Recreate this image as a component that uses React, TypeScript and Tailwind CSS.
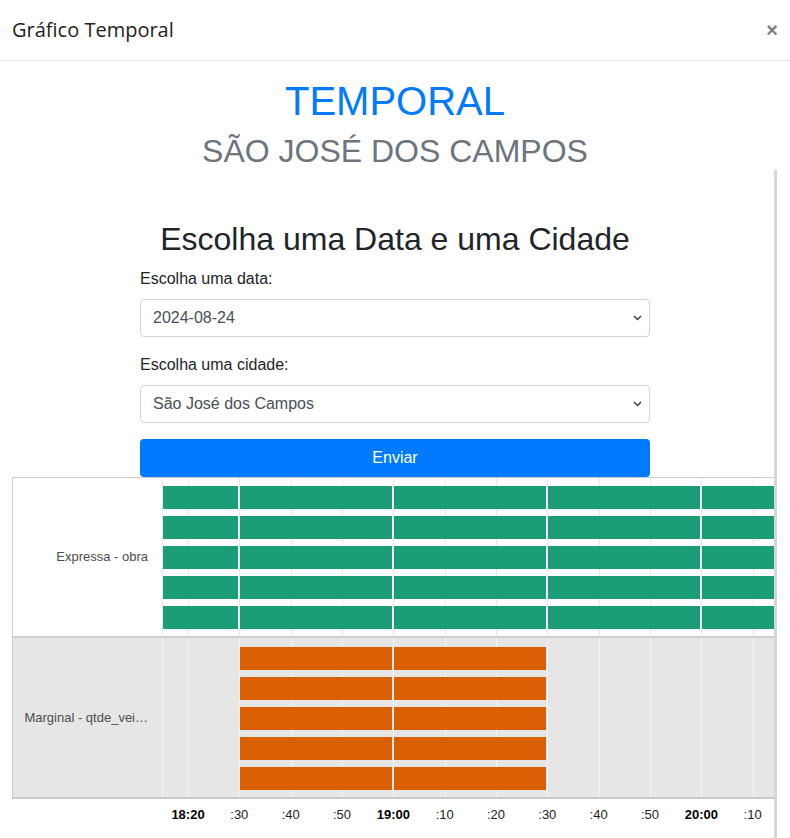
import React from "react";

const PX_PER_10MIN = 51.333;
// grid positions inside the plot area (plot starts at page x=162)
const GRID = Array.from({ length: 12 }, (_, i) => 26 + i * PX_PER_10MIN);
const TICKS = [
  { label: "18:20", bold: true },
  { label: ":30" },
  { label: ":40" },
  { label: ":50" },
  { label: "19:00", bold: true },
  { label: ":10" },
  { label: ":20" },
  { label: ":30" },
  { label: ":40" },
  { label: ":50" },
  { label: "20:00", bold: true },
  { label: ":10" },
];

const PLOT_W = 612;

type Seg = [number, number];

const b = (i: number) => 26 + i * PX_PER_10MIN; // tick i position
const GREEN: Seg[] = [
  [0, b(1)],
  [b(1), b(4)],
  [b(4), b(7)],
  [b(7), b(10)],
  [b(10), PLOT_W + 4],
];
const ORANGE: Seg[] = [
  [b(1), b(4)],
  [b(4), b(7)],
];

function ChevronDown() {
  return (
    <svg width="9" height="6" viewBox="0 0 9 6" className="shrink-0">
      <path d="M1 1l3.5 3.5L8 1" fill="none" stroke="#343a40" strokeWidth="1.4" />
    </svg>
  );
}

function SelectBox({ value }: { value: string }) {
  return (
    <div className="flex h-[38px] w-full items-center justify-between rounded border border-[#ced4da] bg-white pl-3 pr-[7px] text-base text-[#495057]">
      <span>{value}</span>
      <ChevronDown />
    </div>
  );
}

function TimelineRow({
  label,
  segs,
  color,
  top,
  height,
  shaded,
}: {
  label: string;
  segs: Seg[];
  color: string;
  top: number;
  height: number;
  shaded?: boolean;
}) {
  const grid = shaded ? "#f5f5f5" : "#e8e8e8";
  return (
    <div className={`flex ${shaded ? "bg-[#e6e6e6]" : "bg-white"}`} style={{ height }}>
      <div className="flex w-[149px] items-center justify-end pr-[14px] text-[13px] text-[#4d4d4d]">
        <span className="whitespace-nowrap">{label}</span>
      </div>
      <svg width={PLOT_W} height={height} className="block">
        <line x1={0.5} x2={0.5} y1={0} y2={height} stroke={grid} />
        {GRID.map((x) => (
          <line key={x} x1={Math.round(x) + 0.5} x2={Math.round(x) + 0.5} y1={0} y2={height} stroke={grid} />
        ))}
        {[0, 1, 2, 3, 4].map((r) =>
          segs.map(([a, e], i) => (
            <rect
              key={`${r}-${i}`}
              x={Math.round(a) + 1}
              y={top + r * 30}
              width={Math.round(e) - Math.round(a) - 2}
              height={23}
              fill={color}
            />
          ))
        )}
      </svg>
    </div>
  );
}

export default function App() {
  return (
    <div className="h-[838px] w-[790px] overflow-hidden bg-white font-['Liberation_Sans',Arial,sans-serif] text-[#212529]">
      {/* Modal header */}
      <div className="flex h-[61px] items-center justify-between border-b border-[#e5e5e5] pl-3 pr-[12px]">
        <h5 className="font-['Open_Sans',sans-serif] text-[20px] text-[#222]">Gráfico Temporal</h5>
        <span className="font-['Liberation_Sans',sans-serif] text-[20px] leading-none font-bold text-[#808080]">×</span>
      </div>

      {/* Modal body */}
      <div className="pt-4">
        <h1 className="mb-2 text-center text-[40px] leading-[48px] text-[#007bff]">TEMPORAL</h1>
        <h2 className="text-center text-[32px] leading-[37px] text-[#6c757d]">SÃO JOSÉ DOS CAMPOS</h2>

        <div className="w-[777px] border-r-[3px] border-[#d6d6d6] pt-[50px]">
          <form className="ml-[140px] w-[510px]" onSubmit={(e) => e.preventDefault()}>
            <h2 className="mb-[9px] text-center text-[32px] leading-[38px]">Escolha uma Data e uma Cidade</h2>
            <div className="mb-4">
              <label className="mb-2 block leading-6">Escolha uma data:</label>
              <SelectBox value="2024-08-24" />
            </div>
            <div className="mb-4">
              <label className="mb-2 block leading-6">Escolha uma cidade:</label>
              <SelectBox value="São José dos Campos" />
            </div>
            <button
              type="submit"
              className="h-[38px] w-full rounded bg-[#007bff] text-base text-white"
            >
              Enviar
            </button>
          </form>

          {/* Timeline chart */}
          <div className="ml-3 w-[762px]">
            <div className="border-t border-l border-[#cccccc]">
              <TimelineRow label="Expressa - obra" segs={GREEN} color="#1b9e77" top={8} height={158} />
              <div className="border-t-2 border-[#cfcfcf]">
                <TimelineRow label="Marginal - qtde_vei…" segs={ORANGE} color="#d95f02" top={9} height={159} shaded />
              </div>
            </div>
            <div className="border-t-2 border-[#c8c8c8]" />
            <svg width={762} height={40} className="block">
              {GRID.map((x, i) => (
                <text
                  key={i}
                  x={150 + x}
                  y={20}
                  textAnchor="middle"
                  fontSize={13}
                  fontWeight={TICKS[i].bold ? 700 : 400}
                  fill={TICKS[i].bold ? "#000" : "#222"}
                  fontFamily="Liberation Sans, Arial, sans-serif"
                >
                  {TICKS[i].label}
                </text>
              ))}
            </svg>
          </div>
        </div>
      </div>
    </div>
  );
}
